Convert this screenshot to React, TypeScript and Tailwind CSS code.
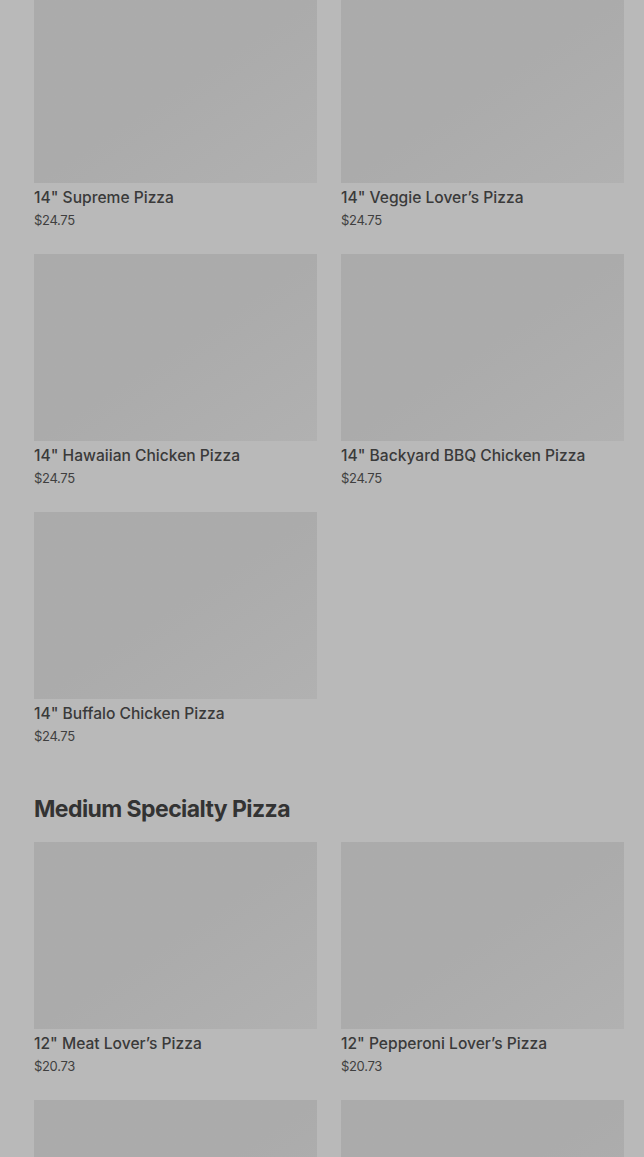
const large = [
  { name: '14" Supreme Pizza', price: "$24.75" },
  { name: '14" Veggie Lover\u2019s Pizza', price: "$24.75" },
  { name: '14" Hawaiian Chicken Pizza', price: "$24.75" },
  { name: '14" Backyard BBQ Chicken Pizza', price: "$24.75" },
  { name: '14" Buffalo Chicken Pizza', price: "$24.75" },
];

const medium = [
  { name: '12" Meat Lover\u2019s Pizza', price: "$20.73" },
  { name: '12" Pepperoni Lover\u2019s Pizza', price: "$20.73" },
  { name: "", price: "" },
  { name: "", price: "" },
];

function PizzaCard({ name, price }: { name: string; price: string }) {
  return (
    <div className="flex flex-col h-[234px]">
      <div className="h-[187px] bg-gradient-to-br from-[#ababab] via-[#ababab] to-[#b1b1b1]" />
      {name && (
        <>
          <p className="mt-[3px] text-[15.6px] leading-6 font-medium text-[#3a3a3a]">{name}</p>
          <p className="text-[13px] leading-5 text-[#3f3f3f] tracking-tight">{price}</p>
        </>
      )}
    </div>
  );
}

export default function App() {
  return (
    <main
      className="h-screen bg-[#b9b9b9] overflow-hidden"
      style={{ fontFamily: "Inter, 'Noto Sans', sans-serif" }}
    >
      <div className="pl-[34px] pr-[20px] -mt-[4px]">
        <div className="grid grid-cols-2 gap-x-6 gap-y-[24px]">
          {large.map((p) => (
            <PizzaCard key={p.name} {...p} />
          ))}
        </div>

        <h2 className="mt-[49px] text-[23px] leading-7 font-bold tracking-tight text-[#333333]">
          Medium Specialty Pizza
        </h2>

        <div className="mt-[19px] grid grid-cols-2 gap-x-6 gap-y-[24px]">
          {medium.map((p, i) => (
            <PizzaCard key={i} {...p} />
          ))}
        </div>
      </div>
    </main>
  );
}
